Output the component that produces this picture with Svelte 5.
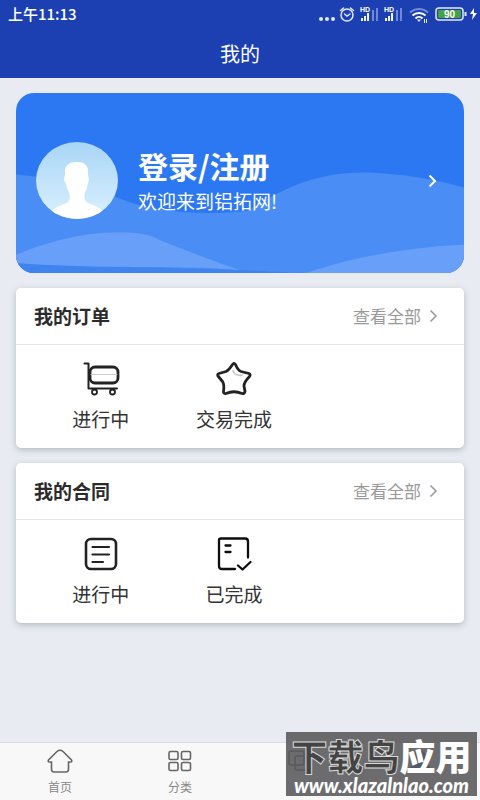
<script>
  const sections = [
    { title: '我的订单', items: [{ icon: 'cart', label: '进行中' }, { icon: 'star', label: '交易完成' }] },
    { title: '我的合同', items: [{ icon: 'list', label: '进行中' }, { icon: 'done', label: '已完成' }] }
  ];
</script>

<div class="page">
  <header>
    <div class="status">
      <span class="time">上午11:13</span>
      <svg class="signals" width="164" height="20" viewBox="-2 0 164 20" aria-hidden="true">
        <g fill="#dfe9ff">
          <circle cx="3" cy="15" r="2" /><circle cx="9" cy="15" r="2" /><circle cx="15" cy="15" r="2" />
        </g>
        <g fill="none" stroke="#dfe9ff" stroke-width="1.5" stroke-linecap="round">
          <circle cx="29" cy="11" r="6" />
          <path d="M26.500 10l2.500 2 3-2M22.500 6.500l3-2.500M35.500 6.500l-3-2.500" />
        </g>
        {#each [43, 67] as x}
          <text x={x - 1} y="8" font-size="7" font-weight="700" fill="#fff">HD</text>
          <g fill="#f2f6ff">
            <rect {x} y="14" width="2" height="3" /><rect x={x + 3} y="12" width="2" height="5" /><rect x={x + 6} y="9" width="2" height="8" />
          </g>
          <g fill="#6f8bd8">
            <rect x={x + 11} y="6" width="2" height="11" /><rect x={x + 15} y="4" width="2" height="13" />
          </g>
        {/each}
        <g fill="none" stroke-width="2">
          <path d="M92 8.500a13 13 0 0 1 18 0" stroke="#6f8bd8" />
          <path d="M94.500 11.500a9.500 9.500 0 0 1 13 0M97.500 14.500a5 5 0 0 1 7 0" stroke="#fff" />
        </g>
        <path d="M99 15.500h4l-2 2.500zM106 15h1v4h-1zM108 15h1v4h-1z" fill="#dfe9ff" />
        <rect x="118" y="4" width="27" height="12" rx="3" fill="none" stroke="#dfe9ff" stroke-width="1.500" />
        <rect x="120" y="6" width="23" height="8" rx="1" fill="#44a046" />
        <rect x="146.500" y="8" width="2" height="4" fill="#dfe9ff" />
        <text x="131.500" y="14" font-size="10" font-weight="700" text-anchor="middle" fill="#fff">90</text>
        <path d="M156 4l-4 6h3l-1 6 5-7h-3z" fill="#fff" />
      </svg>
    </div>
    <h1>我的</h1>
  </header>

  <main>
    <a class="profile" href="#login">
      <svg class="waves" viewBox="0 0 447 179" preserveAspectRatio="none" aria-hidden="true">
        <path d="M0 81C45 85 82 96 114 109C148 119 190 122 232 117C258 101 290 79 348 79C385 80 420 86 447 94V179H0Z" fill="#4a8ef5" />
        <path d="M0 161C30 148 65 140 90 139C135 137 137 144 150 149C178 160 202 169 226 177C180 170 80 176 0 170Z" fill="#689ff8" />
        <path d="M290 179C335 163 395 153 447 151V179Z" fill="#689ff8" />
        <path d="M0 169C80 175 180 172 285 179H0Z" fill="#3f84ee" />
      </svg>
      <svg class="avatar" width="82" height="77" viewBox="0 0 82 77" preserveAspectRatio="none" aria-hidden="true">
        <defs>
          <linearGradient id="sky" x1="0" y1="0" x2="0" y2="1"><stop offset="0" stop-color="#a9d5f6" /><stop offset="1" stop-color="#d9f1fe" /></linearGradient>
          <clipPath id="face"><ellipse cx="41" cy="38.500" rx="41" ry="38.500" /></clipPath>
        </defs>
        <g clip-path="url(#face)">
          <rect width="82" height="77" fill="url(#sky)" />
          <path d="M8 77C15 65 25 64 31 61C35 58 34 54 33 50C30 46 31 42 29 40C27 37 29 35 29 31C28 23 34 20 41 20C48 20 53 23 52 32C52 35 54 37 52 41C51 44 51 48 49 50C48 55 48 59 52 61C59 64 66 65 74 77Z" fill="#fff" />
        </g>
      </svg>
      <span class="welcome">
        <strong>登录/注册</strong>
        <span>欢迎来到铝拓网!</span>
      </span>
      <svg class="chevron" width="9" height="14" viewBox="0 0 9 14" aria-hidden="true"><path d="M1.500 1.500l5.500 5.500-5.500 5.500" /></svg>
    </a>

    {#each sections as section}
      <section class="card">
        <div class="head">
          <h2>{section.title}</h2>
          <a class="all" href="#all">查看全部
            <svg class="chevron" width="9" height="14" viewBox="0 0 9 14" aria-hidden="true"><path d="M1.500 1.500l5.500 5.500-5.500 5.500" /></svg>
          </a>
        </div>
        <div class="items">
          {#each section.items as item}
            <button type="button">
              <svg width="38" height="38" viewBox="0 0 38 38" fill="none" stroke="#222" stroke-linecap="round" stroke-linejoin="round" aria-hidden="true">
                {#if item.icon === 'cart'}
                  <path d="M2.500 3.500H6.500V28.500H35" stroke-width="2" />
                  <rect x="8" y="7" width="28" height="16" rx="5" stroke-width="2.800" />
                  <path d="M9 14.500H35" stroke="#ccc" stroke-width="1" />
                  <circle cx="12.500" cy="32" r="2.500" stroke-width="1.800" /><circle cx="30.500" cy="32" r="2.500" stroke-width="1.800" />
                {:else if item.icon === 'star'}
                  <path d="M18 11Q20 16 27 15" stroke="#ccc" stroke-width="2" />
                  <path d="M17.500 4.500Q19 2.500 20.500 4.500Q23 10.500 26 11.500L34 13.500Q36 14.500 34.500 16.500Q29 22 29 26L30 31.500Q29.500 34 27 33.500Q19 30 11 33.500Q8.500 34 8.500 31.500Q9.500 24.500 7.500 21.500L3 16Q2 14 4 13.500L11 11.500Q14 10 17.500 4.500Z" stroke-width="2.800" />
                {:else if item.icon === 'list'}
                  <rect x="4" y="4" width="30" height="30" rx="5" stroke-width="2.600" />
                  <path d="M10.500 12H27M10.500 19.500H27M10.500 27H21" stroke-width="2.200" />
                {:else}
                  <g stroke="#0d0d0d" stroke-width="2.300">
                    <path d="M20 34H7Q4 34 4 31V5Q4 3.500 6 3.500H30Q33 3.500 33 6.500V22.500" />
                    <path d="M10.500 10.500H15.500M10.500 17H15.500M23 30.500L27.500 34.500L35.500 27" />
                  </g>
                {/if}
              </svg>
              <span>{item.label}</span>
            </button>
          {/each}
        </div>
      </section>
    {/each}
  </main>

  <nav>
    <a href="#home">
      <svg width="26" height="26" viewBox="0 0 26 26" aria-hidden="true"><path d="M4.500 14H2.500Q.5 14 1.500 12L10 3.500Q13 1 16 3.500L24.500 12Q25.500 14 23.500 14H21.500V21Q21.500 24 19 24H7Q4.500 24 4.500 21Z" /></svg>
      <span>首页</span>
    </a>
    <a href="#category">
      <svg width="26" height="26" viewBox="0 0 26 26" aria-hidden="true"><rect x="2" y="3.500" width="9" height="8" rx="1.500" /><rect x="14.500" y="3.500" width="9" height="8" rx="1.500" /><rect x="2" y="14.500" width="9" height="8" rx="1.500" /><rect x="14.500" y="14.500" width="9" height="8" rx="1.500" /></svg>
      <span>分类</span>
    </a>
    <a href="#orders" aria-label="订单">
      <svg width="26" height="26" viewBox="0 0 26 26" aria-hidden="true"><rect x="2" y="3" width="15" height="14" rx="2" /><rect x="8" y="8" width="15" height="14" rx="2" /></svg>
    </a>
    <a class="active" href="#mine" aria-label="我的">
      <svg width="26" height="26" viewBox="0 0 26 26" aria-hidden="true"><circle cx="13" cy="8" r="5" /><path d="M3 23Q3 15 13 15T23 23Z" /></svg>
    </a>
  </nav>

  <div class="mark">
    <strong><span>下载鸟</span>应用</strong>
    <em>www.xlazalnlao.com</em>
  </div>
</div>

<style>
  :global(body) { margin: 0; background: #e8ecf2; }
  .page {
    position: relative;
    display: flex;
    flex-direction: column;
    min-height: 100vh;
    background: #e8ecf2;
    font-family: "Noto Sans", "Noto Sans CJK SC", sans-serif;
    color: #2b2b2b;
  }
  a { color: inherit; text-decoration: none; }
  h1, h2 { margin: 0; }
  header { background: #1c3fb2; color: #fff; padding-bottom: 4px; }
  .status { display: flex; align-items: center; justify-content: space-between; height: 28px; padding: 0 0 0 8px; }
  .time { font: 500 15px/28px "Noto Sans CJK SC", sans-serif; }
  .signals { font-family: "Liberation Sans", sans-serif; }
  h1 { font: 400 20px/40px "Noto Sans CJK SC", sans-serif; text-align: center; padding-top: 6px; }
  main { flex: 1; display: flex; flex-direction: column; gap: 15px; padding: 15px 16px; }
  .profile {
    position: relative;
    display: flex;
    align-items: center;
    height: 180px;
    padding: 0 27px 5px 20px;
    box-sizing: border-box;
    border-radius: 18px;
    overflow: hidden;
    background: #2c78f2;
    color: #fff;
  }
  .waves { position: absolute; inset: 0; width: 100%; height: 100%; }
  .avatar, .welcome, .profile .chevron { position: relative; }
  .welcome { flex: 1; display: flex; flex-direction: column; gap: 4px; padding-left: 20px; font: 400 19px/28px "Noto Sans CJK SC", sans-serif; }
  .welcome strong { font-size: 30px; line-height: 36px; font-weight: 700; }
  .chevron { fill: none; stroke: currentColor; stroke-width: 2; }
  .card { background: #fff; border-radius: 5px; box-shadow: 0 2px 6px rgba(60, 65, 80, .3); }
  .head { display: flex; justify-content: space-between; align-items: center; height: 56px; padding: 0 26px 0 18px; border-bottom: 1px solid #e6e6ea; }
  h2 { font: 700 19px/28px "Noto Sans CJK SC", sans-serif; }
  .all { display: flex; align-items: center; gap: 8px; font: 400 17px/28px "Noto Sans CJK SC", sans-serif; color: #999; }
  .all .chevron { stroke-width: 1.5; }
  .items { display: grid; grid-template-columns: repeat(3, 31%); padding: 15px 0 15px 18px; }
  button { display: flex; flex-direction: column; align-items: center; gap: 7px; padding: 0; border: 0; background: none; color: #333; font: 400 19px/28px "Noto Sans CJK SC", sans-serif; }
  nav { display: flex; height: 57px; background: #f9f8f8; border-top: 1px solid #d9dbe6; }
  nav a { flex: 1; display: flex; flex-direction: column; align-items: center; padding-top: 5px; font: 400 12px/16px "Noto Sans CJK SC", sans-serif; color: #888; gap: 5px; }
  nav svg { fill: none; stroke: #666; stroke-width: 1.6; }
  .active svg { stroke: #2c5fd0; fill: #2c5fd0; }
  .mark {
    position: absolute;
    right: 3px;
    bottom: 4px;
    width: 191px;
    height: 64px;
    display: flex;
    flex-direction: column;
    align-items: center;
    justify-content: flex-end;
    background: rgba(88, 88, 90, .88);
    color: #fff;
    white-space: nowrap;
  }
  .mark strong { font: 900 36px/38px "Noto Sans CJK SC", sans-serif; }
  .mark strong span { color: #444; -webkit-text-stroke: 1px #d8d8d8; }
  .mark em { font: italic 900 20px/22px Lato, sans-serif; }
</style>
